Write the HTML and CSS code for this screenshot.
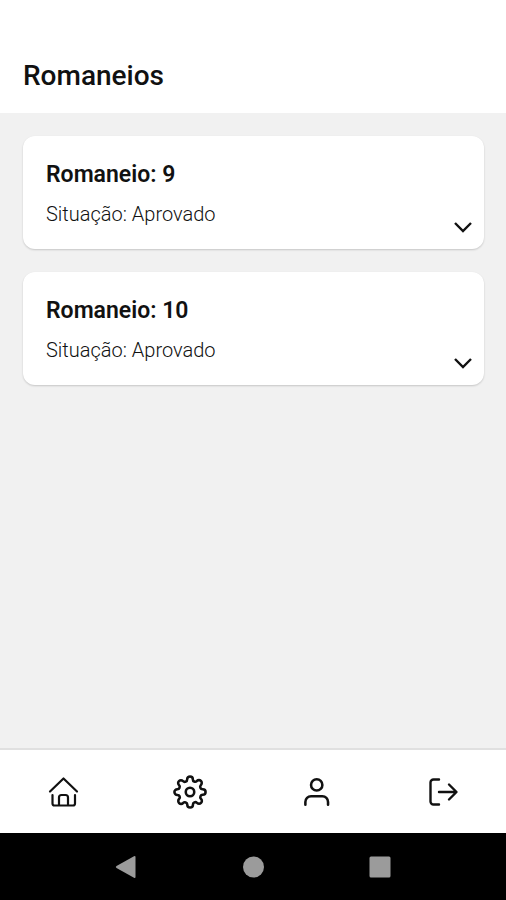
FILE: index.html
```html
<!DOCTYPE html>
<html lang="pt-BR">
<head>
<meta charset="utf-8">
<meta name="viewport" content="width=device-width, initial-scale=1">
<title>Romaneios</title>
<link rel="stylesheet" href="styles.css">
</head>
<body>
<header class="header"><h1 class="title">Romaneios</h1></header>
<main class="list">
  <article class="card">
    <div class="card-text">
      <h2 class="card-title">Romaneio: 9</h2>
      <p class="card-status">Situação: Aprovado</p>
    </div>
    <button class="expand" type="button" aria-label="Expandir romaneio 9">
      <svg class="chevron" viewBox="0 0 20 12"><path d="M2 2l8 8 8-8"/></svg>
    </button>
  </article>
  <article class="card">
    <div class="card-text">
      <h2 class="card-title">Romaneio: 10</h2>
      <p class="card-status">Situação: Aprovado</p>
    </div>
    <button class="expand" type="button" aria-label="Expandir romaneio 10">
      <svg class="chevron" viewBox="0 0 20 12"><path d="M2 2l8 8 8-8"/></svg>
    </button>
  </article>
</main>
<nav class="tabs" aria-label="Principal">
  <a class="tab" href="#inicio" aria-label="Início">
    <svg class="icon icon-home" viewBox="0 0 34 34"><path d="M4 16.5L17.500 3.500l13.500 13M6.500 20v8.500a2 2 0 0 0 2 2h18.500a2 2 0 0 0 2-2V20M13 30v-7.500a2.500 2.500 0 0 1 2.500-2.500h4a2.500 2.500 0 0 1 2.500 2.500V30"/></svg>
  </a>
  <a class="tab" href="#ajustes" aria-label="Configurações">
    <svg class="icon" viewBox="0 0 24 24"><circle cx="12" cy="12" r="3"/><path d="M19.4 15a1.65 1.65 0 0 0 .33 1.82l.06.06a2 2 0 0 1 0 2.83 2 2 0 0 1-2.83 0l-.06-.06a1.65 1.65 0 0 0-1.82-.33 1.65 1.65 0 0 0-1 1.51V21a2 2 0 0 1-2 2 2 2 0 0 1-2-2v-.09A1.65 1.65 0 0 0 9 19.4a1.65 1.65 0 0 0-1.82.33l-.06.06a2 2 0 0 1-2.83 0 2 2 0 0 1 0-2.83l.06-.06a1.65 1.65 0 0 0 .33-1.82 1.65 1.65 0 0 0-1.51-1H3a2 2 0 0 1-2-2 2 2 0 0 1 2-2h.09A1.65 1.65 0 0 0 4.600 9a1.65 1.65 0 0 0-.33-1.82l-.06-.06a2 2 0 0 1 0-2.83 2 2 0 0 1 2.83 0l.06.06a1.65 1.65 0 0 0 1.82.33H9a1.65 1.65 0 0 0 1-1.510V3a2 2 0 0 1 2-2 2 2 0 0 1 2 2v.09a1.65 1.65 0 0 0 1 1.510 1.65 1.65 0 0 0 1.820-.33l.06-.06a2 2 0 0 1 2.830 0 2 2 0 0 1 0 2.830l-.06.06a1.65 1.65 0 0 0-.33 1.820V9a1.65 1.65 0 0 0 1.510 1H21a2 2 0 0 1 2 2 2 2 0 0 1-2 2h-.09a1.65 1.65 0 0 0-1.510 1z"/></svg>
  </a>
  <a class="tab" href="#perfil" aria-label="Perfil">
    <svg class="icon" viewBox="0 0 24 24"><circle cx="12.500" cy="7" r="4"/><path d="M20.500 21v-2a4 4 0 0 0-4-4h-8a4 4 0 0 0-4 4v2"/></svg>
  </a>
  <a class="tab" href="#sair" aria-label="Sair">
    <svg class="icon icon-exit" viewBox="0 0 34 34"><path d="M13 4.500H7.500a3 3 0 0 0-3 3v19a3 3 0 0 0 3 3H13M13 17h17M23 9.500l7.500 7.500-7.500 7.500"/></svg>
  </a>
</nav>
<footer class="system">
  <button class="key" type="button" aria-label="Voltar"><svg class="glyph" viewBox="0 0 24 24"><path d="M1.500 11L19 1.200q1.500-.7 1.500.8v20q0 1.500-1.500.8L1.500 13q-1.500-1 0-2z"/></svg></button>
  <button class="key" type="button" aria-label="Tela inicial"><svg class="glyph" viewBox="0 0 24 24"><circle cx="12.500" cy="12" r="10.500"/></svg></button>
  <button class="key" type="button" aria-label="Recentes"><svg class="glyph" viewBox="0 0 24 24"><rect x="1.500" y="1.500" width="21" height="21" rx="1.500"/></svg></button>
</footer>
</body>
</html>
```
FILE: styles.css
```css
* {
  box-sizing: border-box;
}

body {
  margin: 0;
  min-height: 100vh;
  display: flex;
  flex-direction: column;
  background: #f1f1f1;
  color: #111;
  font-family: Roboto, "Liberation Sans", sans-serif;
}

.header {
  padding: 56px 23px 17px;
  background: #fff;
}

.title {
  margin: 0;
  font-size: 28px;
  line-height: 40px;
  font-weight: 500;
}

.list {
  flex: 1;
  display: flex;
  flex-direction: column;
  gap: 23px;
  padding: 23px 22px 23px 23px;
}

.card {
  display: flex;
  justify-content: space-between;
  align-items: flex-end;
  padding: 25px 7px 21px 23px;
  background: #fff;
  border-radius: 12px;
  box-shadow: 0 1px 2px rgba(0, 0, 0, 0.18);
}

.card-title {
  margin: 0 0 11px;
  font-size: 23px;
  line-height: 28px;
  font-weight: 600;
}

.card-status {
  margin: 0;
  font-size: 20px;
  line-height: 28px;
  font-weight: 300;
}

.expand {
  display: flex;
  padding: 4px;
  margin-bottom: -9px;
  border: 0;
  background: none;
}

.chevron {
  width: 20px;
  height: 12px;
  fill: none;
  stroke: #111;
  stroke-width: 2.4;
}

.tabs {
  display: grid;
  grid-template-columns: repeat(4, 1fr);
  padding: 25px 0 24px;
  background: #fff;
  border-top: 2px solid #e0e0e0;
}

.tab {
  display: flex;
  justify-content: center;
}

.icon {
  width: 34px;
  height: 34px;
  fill: none;
  stroke: #111;
  stroke-width: 1.8;
  stroke-linecap: round;
  stroke-linejoin: round;
}

.icon-home {
  stroke-width: 2.2;
}

.icon-exit {
  stroke-width: 2.4;
}

.system {
  display: grid;
  grid-template-columns: repeat(3, 1fr);
  padding: 22px 12.5% 21px;
  background: #000;
}

.key {
  display: flex;
  justify-content: center;
  padding: 0;
  border: 0;
  background: none;
}

.glyph {
  width: 24px;
  height: 24px;
  fill: #9b9b9b;
}
```
